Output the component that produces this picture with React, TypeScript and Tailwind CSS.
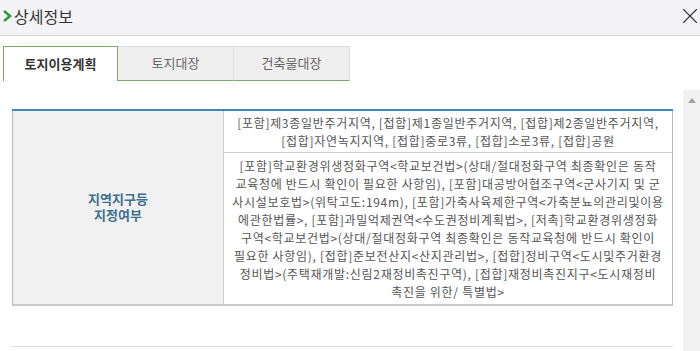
import { X } from 'lucide-react';

const zoneLines = [
  '[포함]제3종일반주거지역, [접합]제1종일반주거지역, [접합]제2종일반주거지역,',
  '[접합]자연녹지지역, [접합]중로3류, [접합]소로3류, [접합]공원',
];

const detailLines = [
  '[포함]학교환경위생정화구역<학교보건법>(상대/절대정화구역 최종확인은 동작',
  '교육청에 반드시 확인이 필요한 사항임), [포함]대공방어협조구역<군사기지 및 군',
  '사시설보호법>(위탁고도:194m), [포함]가축사육제한구역<가축분뇨의관리및이용',
  '에관한법률>, [포함]과밀억제권역<수도권정비계획법>, [저촉]학교환경위생정화',
  '구역<학교보건법>(상대/절대정화구역 최종확인은 동작교육청에 반드시 확인이',
  '필요한 사항임), [접합]준보전산지<산지관리법>, [접합]정비구역<도시및주거환경',
  '정비법>(주택재개발:신림2재정비촉진구역), [접합]재정비촉진지구<도시재정비',
  '촉진을 위한/ 특별법>',
];

const tabs = ['토지이용계획', '토지대장', '건축물대장'];

export default function App() {
  return (
    <div className="h-[351px] w-[700px] overflow-hidden bg-white font-['Noto_Sans_CJK_KR','Noto_Sans',sans-serif]">
      <header className="flex h-[36px] items-center justify-between border-b border-[#d8d8d8] bg-[#f4f4f6]">
        <div className="flex items-center pb-[3px]">
          <svg width="13" height="14" viewBox="0 0 13 14" className="ml-[1px]">
            <polyline points="3,2 9,7 3,12" fill="none" stroke="#2e9a44" strokeWidth="2.6" />
          </svg>
          <h1 className="text-[16px] leading-none text-[#333]">상세정보</h1>
        </div>
        <X size={26} strokeWidth={1} className="-mr-[3px] mb-[4px] text-[#333]" />
      </header>

      <nav className="flex pl-[3px] pt-[10px]">
        {tabs.map((tab, i) =>
          i === 0 ? (
            <div
              key={tab}
              className="flex h-[35px] w-[115px] items-center justify-center border border-b-0 border-[#7aa86d] bg-white pb-[1px] text-[13px] font-semibold text-[#333]"
            >
              {tab}
            </div>
          ) : (
            <div
              key={tab}
              className="flex h-[35px] w-[116px] items-center justify-center border-r border-t border-b border-[#dcdcdc] border-b-[#7aa86d] bg-[#efefef] pb-[1px] text-[13px] text-[#666]"
            >
              {tab}
            </div>
          ),
        )}
      </nav>

      <div className="h-[9px]" />

      <div className="flex h-[261px]">
        <div className="flex-1 pl-[12px] pt-[19px]">
          <div className="w-[661px] border-t-2 border-[#3f87b8]">
            <div className="flex border-b-2 border-l border-r border-[#bbbbbb] border-b-[#c9c9c9]">
              <div className="flex w-[211px] items-center justify-center border-r border-[#cccccc] bg-[#f1f1f1] pb-[2px]">
                <p className="text-center text-[13px] font-bold leading-[16px] text-[#3d6f8e]">
                  지역지구등
                  <br />
                  지정여부
                </p>
              </div>
              <div className="flex-1 text-[12px] leading-[18px] tracking-[0.7px] text-[#555]">
                <div className="flex h-[42px] flex-col items-center justify-center border-b border-[#cccccc]">
                  {zoneLines.map((line) => (
                    <p key={line} className="whitespace-nowrap">
                      {line}
                    </p>
                  ))}
                </div>
                <div className="flex flex-col items-center pb-[3px] pt-[4px]">
                  {detailLines.map((line) => (
                    <p key={line} className="whitespace-nowrap">
                      {line}
                    </p>
                  ))}
                </div>
              </div>
            </div>
            <div className="mt-[40px] border-t border-[#dddddd]" />
          </div>
        </div>

        <div className="flex w-[17px] justify-center bg-[#f1f1f1] pt-[8px]">
          <svg width="8" height="5" viewBox="0 0 8 5">
            <polygon points="4,0 8,5 0,5" fill="#a3a3a3" />
          </svg>
        </div>
      </div>
    </div>
  );
}
